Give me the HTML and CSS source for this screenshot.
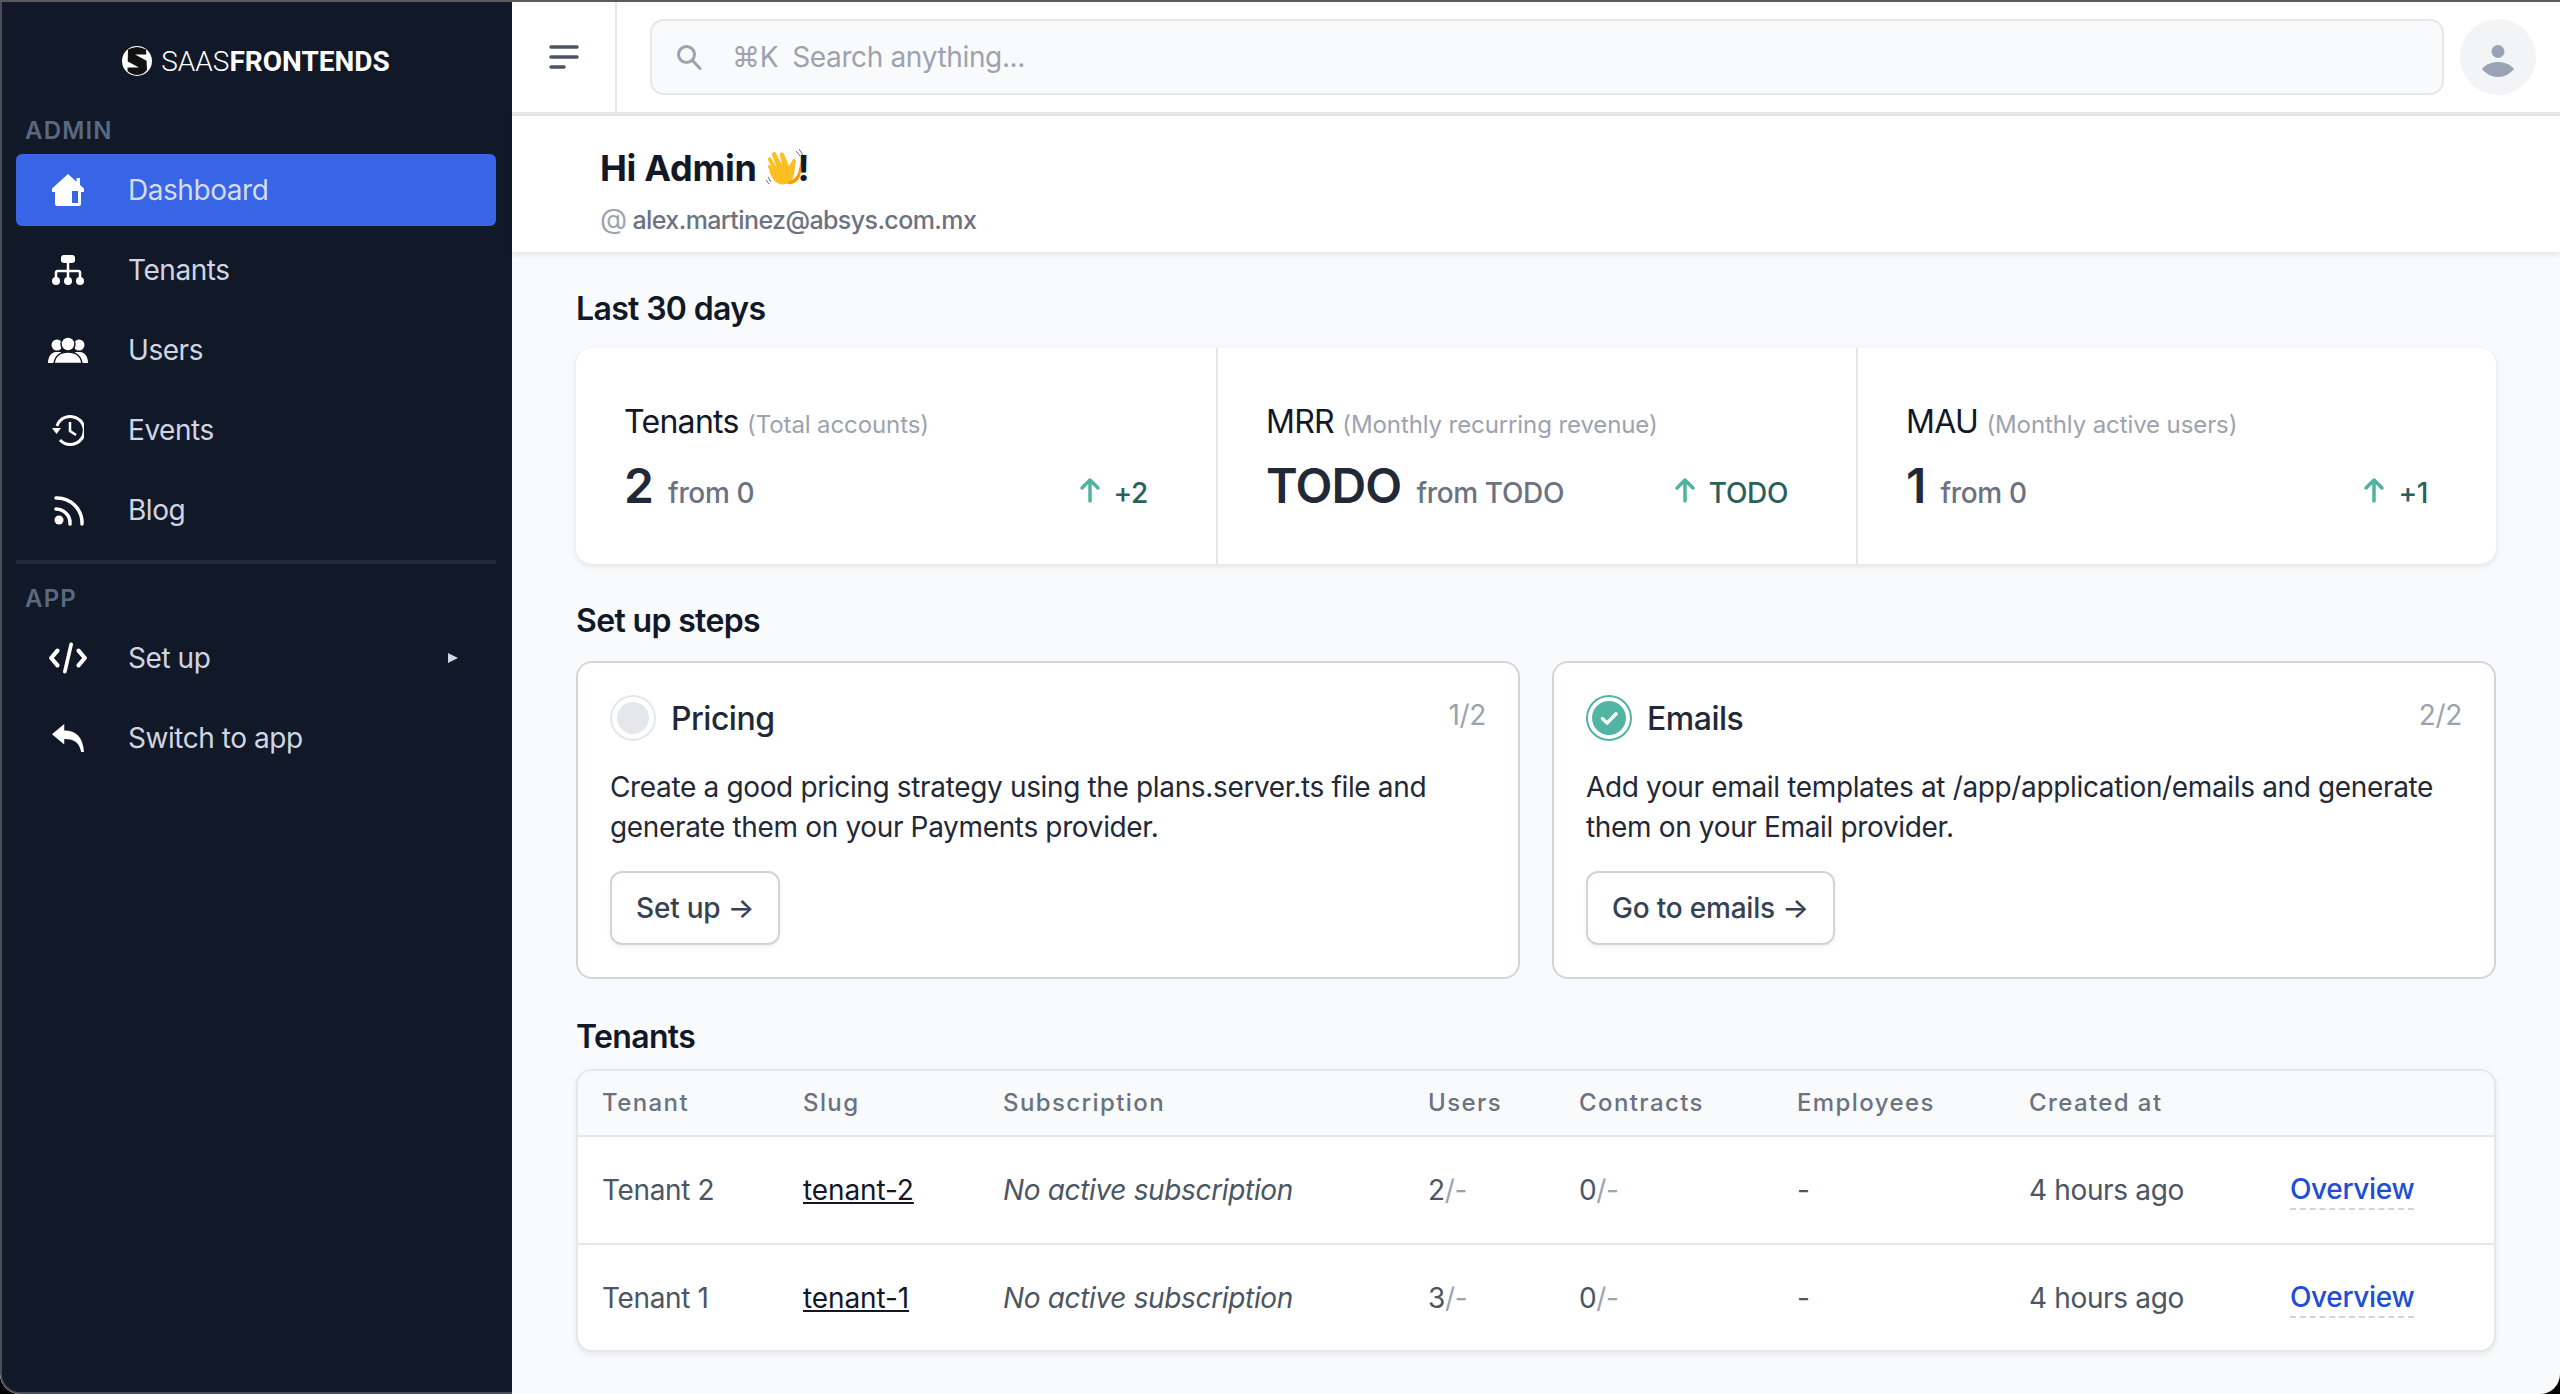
FILE: index.html
```html
<!DOCTYPE html>
<html lang="en">
<head>
    <meta charset="UTF-8">
    <title>Dashboard | SaasFrontends</title>
    <link rel="stylesheet" href="styles.css">
</head>
<body>
    <div class="window">
        <aside class="sidebar">
            <div class="logo">
                <svg class="logo-mark" viewBox="0 0 30 30">
                    <circle cx="15" cy="15" r="15" fill="#fff"/>
                    <path d="M6 3.500Q15 -1.500 24 3.500L25 24 22 27Q15 31 8 27L5.500 25z" fill="#111"/>
                    <path d="M13 8.500H26V15.500z M4 14.500V21.500H17z" fill="#fff"/>
                </svg>
                <span class="logo-text">SAAS<b>FRONTENDS</b></span>
            </div>
            <div class="nav-label">Admin</div>
            <a class="nav-item active">
                <svg class="nav-icon" viewBox="0 0 32 32"><path d="M16 0L0 14.500V18h3v11.500a2.500 2.500 0 0 0 2.500 2.500h21a2.500 2.500 0 0 0 2.500-2.500V18h3v-3.500l-4-3.600V4h-3.500v3.800z" fill="#fff"/><rect x="20" y="17" width="6" height="12" fill="#3864e6"/></svg>
                <span>Dashboard</span>
            </a>
            <a class="nav-item">
                <svg class="nav-icon" viewBox="0 0 32 32"><rect x="9" y="1" width="14" height="8" rx="3" fill="#fff"/><path d="M16 8v16M4 24v-5.500a1.500 1.500 0 0 1 1.500-1.500h21a1.500 1.500 0 0 1 1.500 1.500V24" fill="none" stroke="#fff" stroke-width="2.500"/><circle cx="4" cy="27" r="4" fill="#fff"/><circle cx="16" cy="27" r="4" fill="#fff"/><circle cx="28" cy="27" r="4" fill="#fff"/></svg>
                <span>Tenants</span>
            </a>
            <a class="nav-item">
                <svg class="nav-icon wide" viewBox="0 0 40 26"><circle cx="9" cy="8" r="5.500" fill="#fff"/><path d="M0 26c0-6 3-11 8-11h5v11z" fill="#fff"/><circle cx="31" cy="8" r="5.500" fill="#fff"/><path d="M40 26c0-6-3-11-8-11h-5v11z" fill="#fff"/><circle cx="20" cy="7" r="7" fill="#fff" stroke="#111827" stroke-width="1.500"/><path d="M6 26.500c1-7 6-11.500 14-11.500s13 4.500 14 11.500z" fill="#fff" stroke="#111827" stroke-width="1.500"/></svg>
                <span>Users</span>
            </a>
            <a class="nav-item">
                <svg class="nav-icon" viewBox="0 0 32 32"><path d="M5 12A14 14 0 1 1 8 26" fill="none" stroke="#fff" stroke-width="3"/><path d="M0 14h9l-4.500 6z" fill="#fff"/><path d="M18 8v9l6 4" fill="none" stroke="#fff" stroke-width="2.500"/></svg>
                <span>Events</span>
            </a>
            <a class="nav-item">
                <svg class="nav-icon" viewBox="0 0 32 32"><circle cx="7" cy="26" r="4.500" fill="#fff"/><path d="M4 15a14 14 0 0 1 14 15M4 4a25 25 0 0 1 26 26" fill="none" stroke="#fff" stroke-width="3.500" stroke-linecap="round"/></svg>
                <span>Blog</span>
            </a>
            <div class="nav-divider"></div>
            <div class="nav-label">App</div>
            <a class="nav-item">
                <svg class="nav-icon wide" viewBox="0 0 38 30"><path d="M9 8L3 15l6 7M29 8l6 7-6 7" fill="none" stroke="#fff" stroke-width="4" stroke-linecap="round" stroke-linejoin="round"/><path d="M22 2l-6 26" fill="none" stroke="#fff" stroke-width="3.500" stroke-linecap="round"/></svg>
                <span>Set up</span>
                <span class="nav-caret"></span>
            </a>
            <a class="nav-item">
                <svg class="nav-icon" viewBox="0 0 34 30"><path d="M13 0L0 11l13 11v-6c10 0 16 3 18 14h3C33 14 26 7 13 7z" fill="#fff"/></svg>
                <span>Switch to app</span>
            </a>
        </aside>

        <div class="main">
            <header class="topbar">
                <button class="menu-btn">
                    <svg viewBox="0 0 30 26" width="30" height="26"><path d="M2 2h26M2 12h26M2 22h13" stroke="#4b5563" stroke-width="3.500" stroke-linecap="round"/></svg>
                </button>
                <div class="search">
                    <svg class="search-icon" viewBox="0 0 26 26"><circle cx="10.500" cy="10.500" r="8" fill="none" stroke="#9ca3af" stroke-width="3"/><path d="M16.500 16.500L24 24.500" stroke="#9ca3af" stroke-width="3" stroke-linecap="round"/></svg>
                    <span class="search-key">⌘K</span>
                    <span>Search anything...</span>
                </div>
                <div class="avatar">
                    <svg viewBox="0 0 34 32" width="34" height="32"><circle cx="17" cy="6.500" r="6.500" fill="#9aa3b6"/><path d="M1 24C5 19 11 17 17 17s12 2 16 7C29 29 23 32 17 32S5 29 1 24z" fill="#9aa3b6"/></svg>
                </div>
            </header>

            <section class="welcome">
                <h1>Hi Admin
                    <svg class="wave" viewBox="0 0 40 40" width="40" height="40"><path d="M5 23L3 19c-1-2 2-3 3-1l3 5-6-11c-1-2 2-4 3-2l6 10-5-13c-1-3 3-4 4-2l6 12-2-10c-1-3 3-3 4-1l5 12 3-5c1-3 4-2 4 0l-2 13c-1 8-8 12-14 10-5-1-8-6-11-13z" fill="#fbbf24"/><path d="M24 33c5-1 9-5 10-12l2-8 1.500 1-2 12c-1 7-7 11-13 10z" fill="#f59e0b"/><path d="M31 3l4 5M34 1l4 6M3 29l3 5M1 32l3 4" fill="none" stroke="#6b7280" stroke-width="1"/></svg><span class="wave-end">!</span>
                </h1>
                <p class="email"><span class="at">@</span> alex.martinez@absys.com.mx</p>
            </section>

            <main class="content">
                <h2 class="section-title">Last 30 days</h2>
                <div class="stats">
                    <div class="stat">
                        <div class="stat-title">Tenants <span>(Total accounts)</span></div>
                        <div class="stat-row">
                            <div class="stat-value"><strong>2</strong><span>from 0</span></div>
                            <div class="stat-delta">
                                <svg viewBox="0 0 22 26" width="22" height="26"><path d="M11 24V3M3 11l8-8 8 8" fill="none" stroke="#4fb3a0" stroke-width="3.500" stroke-linecap="round" stroke-linejoin="round"/></svg>
                                <span>+2</span>
                            </div>
                        </div>
                    </div>
                    <div class="stat">
                        <div class="stat-title">MRR <span>(Monthly recurring revenue)</span></div>
                        <div class="stat-row">
                            <div class="stat-value"><strong>TODO</strong><span>from TODO</span></div>
                            <div class="stat-delta">
                                <svg viewBox="0 0 22 26" width="22" height="26"><path d="M11 24V3M3 11l8-8 8 8" fill="none" stroke="#4fb3a0" stroke-width="3.500" stroke-linecap="round" stroke-linejoin="round"/></svg>
                                <span>TODO</span>
                            </div>
                        </div>
                    </div>
                    <div class="stat">
                        <div class="stat-title">MAU <span>(Monthly active users)</span></div>
                        <div class="stat-row">
                            <div class="stat-value"><strong>1</strong><span>from 0</span></div>
                            <div class="stat-delta">
                                <svg viewBox="0 0 22 26" width="22" height="26"><path d="M11 24V3M3 11l8-8 8 8" fill="none" stroke="#4fb3a0" stroke-width="3.500" stroke-linecap="round" stroke-linejoin="round"/></svg>
                                <span>+1</span>
                            </div>
                        </div>
                    </div>
                </div>

                <h2 class="section-title steps-title">Set up steps</h2>
                <div class="steps">
                    <div class="step">
                        <div class="step-head">
                            <span class="step-circle"></span>
                            <h3>Pricing</h3>
                            <span class="step-count">1/2</span>
                        </div>
                        <p>Create a good pricing strategy using the plans.server.ts file and generate them on your Payments provider.</p>
                        <a class="btn">Set up <span class="btn-arrow">→</span></a>
                    </div>
                    <div class="step">
                        <div class="step-head">
                            <span class="step-circle done">
                                <svg viewBox="0 0 36 36" width="36" height="36"><circle cx="18" cy="18" r="18" fill="#52b5a3"/><path d="M11 18.500l5 5 9.500-10" fill="none" stroke="#fff" stroke-width="3.500" stroke-linecap="round" stroke-linejoin="round"/></svg>
                            </span>
                            <h3>Emails</h3>
                            <span class="step-count">2/2</span>
                        </div>
                        <p>Add your email templates at /app/application/emails and generate them on your Email provider.</p>
                        <a class="btn">Go to emails <span class="btn-arrow">→</span></a>
                    </div>
                </div>

                <h2 class="section-title tenants-title">Tenants</h2>
                <div class="table-wrap">
                    <table class="tenants">
                        <thead>
                            <tr>
                                <th class="col-tenant">Tenant</th>
                                <th class="col-slug">Slug</th>
                                <th class="col-sub">Subscription</th>
                                <th class="col-users">Users</th>
                                <th class="col-contracts">Contracts</th>
                                <th class="col-employees">Employees</th>
                                <th class="col-created">Created at</th>
                                <th></th>
                            </tr>
                        </thead>
                        <tbody>
                            <tr>
                                <td>Tenant 2</td>
                                <td><a class="slug">tenant-2</a></td>
                                <td class="no-sub">No active subscription</td>
                                <td>2<span class="muted">/-</span></td>
                                <td>0<span class="muted">/-</span></td>
                                <td>-</td>
                                <td>4 hours ago</td>
                                <td><a class="overview">Overview</a></td>
                            </tr>
                            <tr>
                                <td>Tenant 1</td>
                                <td><a class="slug">tenant-1</a></td>
                                <td class="no-sub">No active subscription</td>
                                <td>3<span class="muted">/-</span></td>
                                <td>0<span class="muted">/-</span></td>
                                <td>-</td>
                                <td>4 hours ago</td>
                                <td><a class="overview">Overview</a></td>
                            </tr>
                        </tbody>
                    </table>
                </div>
            </main>
        </div>
    </div>
</body>
</html>
```

FILE: styles.css
```css
* { box-sizing: border-box; }
html, body { margin: 0; height: 100%; background: #000; }
body { font-family: Inter, "Noto Sans", sans-serif; font-size: 28px; letter-spacing: -0.35px; color: #111827; overflow: hidden; }
h1, h2, h3, p { margin: 0; }

.window { display: flex; height: 1394px; border-top: 2px solid #5a5a5f; background: #f9fafb; border-radius: 0 0 20px 20px; overflow: hidden; }

/* sidebar */
.sidebar { width: 512px; flex: none; background: #111827; border-left: 2px solid #4a4d57; border-bottom: 2px solid #4a4d57; border-bottom-left-radius: 20px; padding: 0 16px 0 14px; letter-spacing: -0.45px; }
.logo { display: flex; align-items: center; justify-content: center; height: 113px; padding-top: 5px; gap: 9px; }
.logo-mark { width: 30px; height: 30px; }
.logo-text { font-family: Roboto, sans-serif; font-size: 28px; font-weight: 300; letter-spacing: 0; color: #fff; }
.logo-text b { font-weight: 700; }
.nav-label { font-size: 24px; font-weight: 600; letter-spacing: 1.2px; line-height: 32px; color: #5a6880; text-transform: uppercase; padding-left: 9px; margin-bottom: 7px; }
.nav-item { display: flex; align-items: center; height: 72px; margin-bottom: 8px; border-radius: 6px; color: #d1d5e2; font-weight: 400; position: relative; }
.nav-item.active { background: #3864e6; color: #d5dcf0; }
.nav-icon { width: 32px; height: 32px; margin-left: 36px; margin-right: 44px; flex: none; }
.nav-icon.wide { width: 40px; margin-left: 32px; margin-right: 40px; }
.nav-caret { width: 0; height: 0; margin-left: auto; margin-right: 38px; border-left: 10px solid #d1d5e2; border-top: 5.500px solid transparent; border-bottom: 5.500px solid transparent; }
.nav-divider { height: 4px; background: #1f2a3c; margin: 14px 0 19px; }

/* top bar */
.main { flex: 1; min-width: 0; display: flex; flex-direction: column; }
.topbar { height: 114px; flex: none; display: flex; align-items: flex-start; background: #fff; border-bottom: 4px solid #e5e7eb; }
.menu-btn { width: 105px; height: 110px; flex: none; background: none; border: none; border-right: 2px solid #e5e7eb; padding: 2px 0 0 0; display: flex; align-items: center; justify-content: center; }
.search { flex: 1; display: flex; align-items: center; height: 76px; margin: 17px 16px 0 33px; padding-left: 24px; background: #f9fafb; border: 2px solid #e5e7eb; border-radius: 14px; color: #9ca3af; }
.search-icon { width: 26px; height: 26px; margin-right: 30px; }
.search-key { margin-right: 14px; }
.avatar { width: 76px; height: 76px; margin: 17px 24px 0 0; padding-top: 8px; border-radius: 50%; background: #f3f4f6; display: flex; align-items: center; justify-content: center; }

/* welcome */
.welcome { height: 136px; flex: none; background: #fff; padding: 28px 0 0 88px; box-shadow: 0 2px 6px rgba(0,0,0,.1); position: relative; }
.welcome h1 { font-size: 36px; font-weight: 700; letter-spacing: -0.3px; line-height: 48px; display: flex; align-items: center; gap: 8px; }
.wave-end { margin-left: -15px; }
.email { font-size: 25px; letter-spacing: -0.6px; line-height: 36px; margin-top: 9px; color: #6b7280; font-weight: 500; }
.at { font-size: 28px; color: #9ca3af; font-weight: 400; }

/* content */
.content { padding: 37px 64px 0 64px; flex: 1; }
.section-title { font-size: 32px; font-weight: 600; letter-spacing: -0.65px; line-height: 40px; color: #111827; }
.stats { display: grid; grid-template-columns: repeat(3, 1fr); margin-top: 19px; height: 216px; background: #fff; border-radius: 16px; box-shadow: 0 2px 6px rgba(0,0,0,.1); }
.stat { padding: 50px 68px 0 48px; border-left: 2px solid #e5e7eb; }
.stat:first-child { border-left: none; }
.stat-title { font-size: 32px; letter-spacing: -0.7px; line-height: 48px; color: #111827; }
.stat-title span { font-size: 24px; letter-spacing: -0.1px; color: #9ca3af; }
.stat-row { display: flex; justify-content: space-between; align-items: baseline; margin-top: 7px; }
.stat-value strong { font-size: 48px; font-weight: 600; letter-spacing: -0.8px; color: #1f2937; margin-right: 15px; }
.stat-value span { font-weight: 500; color: #6b7280; }
.stat-delta { display: flex; align-items: baseline; gap: 13px; font-weight: 500; color: #2b5f5b; }
.steps-title { margin-top: 37px; }
.steps { display: grid; grid-template-columns: 1fr 1fr; gap: 32px; margin-top: 20px; }
.step { height: 318px; background: #fff; border: 2px solid #d1d5db; border-radius: 16px; padding: 32px; }
.step-head { display: flex; align-items: flex-start; height: 48px; }
.step-circle { width: 46px; height: 46px; flex: none; border-radius: 50%; border: 7px solid #fff; outline: 2px solid #e5e7eb; outline-offset: -2px; background: #e5e7eb; }
.step-circle.done { border: none; outline: 2px solid #52b5a3; outline-offset: -2px; background: #fff; padding: 6px; }
.step-circle.done svg { display: block; width: 34px; height: 34px; }
.step h3 { font-size: 32px; font-weight: 500; letter-spacing: -0.5px; line-height: 48px; color: #1f2937; margin-left: 15px; }
.step-count { margin-left: auto; color: #9ca3af; line-height: 40px; }
.step p { margin-top: 24px; line-height: 40px; color: #1f2937; }
.btn { display: inline-block; margin-top: 24px; padding: 14px 24px; line-height: 42px; letter-spacing: -0.2px; background: #fff; border: 2px solid #d1d5db; border-radius: 12px; font-weight: 500; color: #374151; box-shadow: 0 2px 4px rgba(0,0,0,.06); }
.tenants-title { margin-top: 38px; }
.table-wrap { margin-top: 12px; background: #fff; border: 2px solid #e5e7eb; border-radius: 16px; overflow: hidden; box-shadow: 0 2px 6px rgba(0,0,0,.08); }
.tenants { width: 100%; border-collapse: collapse; table-layout: fixed; }
.tenants th { height: 65px; padding: 0 0 2px 24px; text-align: left; font-size: 24px; font-weight: 500; letter-spacing: 1.4px; color: #6b7280; background: #f9fafb; border-bottom: 2px solid #e5e7eb; }
.tenants td { height: 108px; padding: 0 0 0 24px; color: #4b5563; border-bottom: 2px solid #e5e7eb; white-space: nowrap; }
.tenants tr:last-child td { border-bottom: none; height: 106px; }
.col-tenant { width: 201px; }
.col-slug { width: 200px; }
.col-sub { width: 425px; }
.col-users { width: 151px; }
.col-contracts { width: 218px; }
.col-employees { width: 232px; }
.col-created { width: 261px; }
.slug { color: #111827; text-decoration: underline; letter-spacing: -0.1px; }
.no-sub { font-style: italic; }
.muted { color: #9ca3af; }
.overview { color: #1d4ed8; font-weight: 500; border-bottom: 2px dashed #d1d5db; padding-bottom: 2px; vertical-align: 2px; }
```
